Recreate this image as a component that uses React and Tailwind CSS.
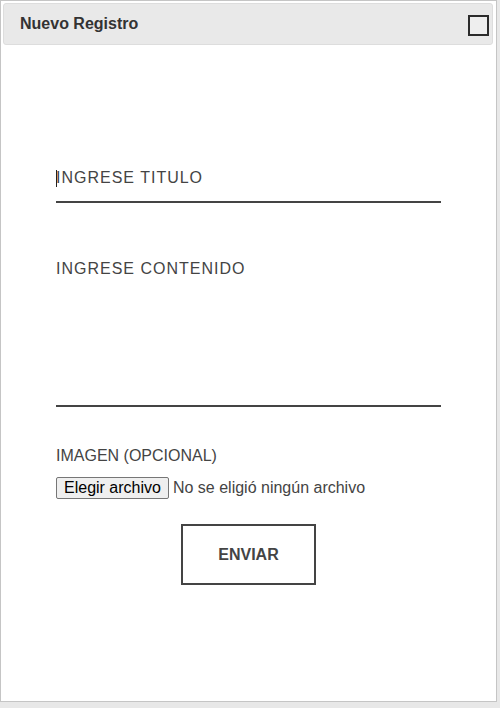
import React from 'react';

const App = () => {
  return (
    <div className="w-[500px] h-[708px] bg-[#e8e8e8] font-['Liberation_Sans',Arial,sans-serif]">
      <div className="w-[497px] h-[702px] bg-white border border-[#c5c5c5] flex flex-col">
        <div className="mt-[2px] ml-[2px] mr-[3px] h-[42px] flex items-center justify-between pl-[16px] pr-[3px] bg-[#e9e9e9] border border-[#dddddd] rounded-[3px]">
          <span className="text-[16px] font-bold text-[#333333]">Nuevo Registro</span>
          <button
            type="button"
            className="mt-[2px] w-[21px] h-[21px] border-2 border-[#2b2b2b] bg-[#eeeeee]"
            aria-label="Cerrar"
          />
        </div>

        <form className="px-[55px] flex flex-col" onSubmit={(e) => e.preventDefault()}>
          <div className="relative mt-[109px]">
            <input
              type="text"
              placeholder="INGRESE TITULO"
              className="block w-full h-[49px] p-0 bg-transparent border-0 border-b-2 border-[#444444] text-[16px] tracking-[1px] text-[#444444] placeholder:text-[#444444] outline-none"
            />
            <span className="absolute left-0 top-[16px] w-px h-[17px] bg-[#222222]" />
          </div>

          <textarea
            placeholder="INGRESE CONTENIDO"
            className="block mt-[57px] w-full h-[147px] p-0 resize-none bg-transparent border-0 border-b-2 border-[#444444] text-[16px] leading-[18px] tracking-[1px] text-[#444444] placeholder:text-[#444444] outline-none"
          />

          <label className="block mt-[40px] text-[16px] leading-[18px] text-[#444444]">IMAGEN (OPCIONAL)</label>

          <label className="mt-[12px] h-[22px] flex items-center gap-[4px] cursor-pointer">
            <span className="h-[22px] px-[7px] flex items-center bg-[#efefef] border border-[#767676] rounded-[2px] text-[16px] text-black">
              Elegir archivo
            </span>
            <span className="text-[16px] text-[#444444]">No se eligió ningún archivo</span>
            <input type="file" accept="image/*" className="sr-only" />
          </label>

          <button
            type="submit"
            className="mt-[25px] self-center w-[135px] h-[61px] border-2 border-[#444444] bg-white text-[16px] font-bold text-[#444444]"
          >
            ENVIAR
          </button>
        </form>
      </div>
    </div>
  );
};

export default App;
